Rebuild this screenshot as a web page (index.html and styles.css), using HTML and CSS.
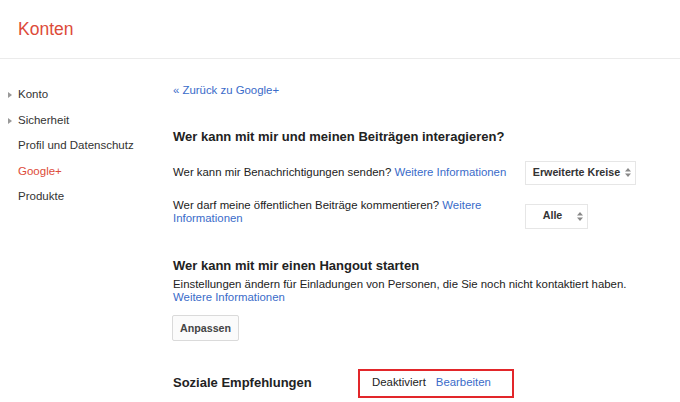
FILE: index.html
```html
<!DOCTYPE html>
<html lang="de">
<head>
    <meta charset="UTF-8">
    <meta name="viewport" content="width=device-width, initial-scale=1.0">
    <title>Konten</title>
    <link rel="stylesheet" href="styles.css">
</head>
<body>
    <div class="header">
        <h1>Konten</h1>
    </div>

    <div class="content">
        <!-- Navigation links -->
        <ul class="sidebar">
            <li class="has-arrow">Konto</li>
            <li class="has-arrow">Sicherheit</li>
            <li>Profil und Datenschutz</li>
            <li class="active">Google+</li>
            <li>Produkte</li>
        </ul>

        <div class="main">
            <a class="back" href="#">« Zurück zu Google+</a>

            <!-- Interaktion -->
            <h2 class="first">Wer kann mit mir und meinen Beiträgen interagieren?</h2>
            <div class="row">
                <div class="label">Wer kann mir Benachrichtigungen senden? <a href="#">Weitere Informationen</a></div>
                <div class="select wide">
                    <span class="value">Erweiterte Kreise</span>
                    <svg class="arrows" width="6" height="9" viewBox="0 0 6 9"><path d="M3 0 L6 3.5 H0 Z M3 9 L6 5.5 H0 Z" fill="#888"/></svg>
                </div>
            </div>
            <div class="row row-top">
                <div class="label">Wer darf meine öffentlichen Beiträge kommentieren? <a href="#">Weitere Informationen</a></div>
                <div class="select narrow">
                    <span class="value">Alle</span>
                    <svg class="arrows" width="6" height="9" viewBox="0 0 6 9"><path d="M3 0 L6 3.5 H0 Z M3 9 L6 5.5 H0 Z" fill="#888"/></svg>
                </div>
            </div>

            <!-- Hangout -->
            <h2 class="hangout">Wer kann mit mir einen Hangout starten</h2>
            <p class="desc">Einstellungen ändern für Einladungen von Personen, die Sie noch nicht kontaktiert haben.<br><a href="#">Weitere Informationen</a></p>
            <button class="btn">Anpassen</button>

            <!-- Soziale Empfehlungen -->
            <div class="social">
                <h2>Soziale Empfehlungen</h2>
                <div class="highlight">
                    <span>Deaktiviert</span>
                    <a href="#">Bearbeiten</a>
                </div>
            </div>
        </div>
    </div>
</body>
</html>
```

FILE: styles.css
```css
body {
    margin: 0;
    font-family: "Liberation Sans", Arial, sans-serif;
    font-size: 11.4px;
    color: #222;
    background-color: #fff;
}
a {
    color: #3a6bc9;
    text-decoration: none;
}
.header {
    height: 59px;
    border-bottom: 1px solid #ebebeb;
    padding: 18px 0 0 18px;
    box-sizing: border-box;
}
.header h1 {
    margin: 0;
    font-size: 17.5px;
    line-height: 22px;
    font-weight: normal;
    color: #dd4b39;
}
.content {
    display: grid;
    grid-template-columns: 173px 1fr;
    padding-top: 21px;
}
.sidebar {
    list-style: none;
    margin: 2px 0 0 0;
    padding: 0 0 0 18px;
    font-size: 11.5px;
}
.sidebar li {
    height: 25.5px;
    line-height: 25px;
    color: #333;
    position: relative;
}
.sidebar li.has-arrow::before {
    content: "";
    position: absolute;
    left: -10px;
    top: 10px;
    border-left: 4px solid #999;
    border-top: 3px solid transparent;
    border-bottom: 3px solid transparent;
}
.sidebar li.active {
    color: #dd4b39;
}
.main {
    padding-top: 3px;
    line-height: 13.5px;
}
.back {
    display: block;
    margin-top: 1px;
}
h2 {
    margin: 0;
    font-size: 13px;
    line-height: 16px;
    color: #222;
}
h2.first {
    margin-top: 31px;
}
.row {
    display: grid;
    grid-template-columns: 352px auto;
    align-items: center;
    margin-top: 16px;
}
.row .label {
    padding-right: 10px;
}
.row-top {
    align-items: start;
    margin-top: 14px;
}
.row-top .select {
    margin-top: 5px;
    height: 25px;
}
.select {
    display: flex;
    align-items: center;
    gap: 3px;
    height: 24px;
    box-sizing: border-box;
    border: 1px solid #e6e6e6;
    padding: 0 4px 0 5px;
    font-size: 10.7px;
    font-weight: bold;
    color: #333;
}
.select .value {
    flex: 1;
    text-align: center;
}
.select.wide {
    width: 111px;
}
.select.narrow {
    width: 63px;
}
h2.hangout {
    margin-top: 29px;
}
.desc {
    margin: 4px 0 0 0;
}
.btn {
    display: block;
    margin: 10px 0 0 -1px;
    height: 26px;
    padding: 0 7px;
    font-family: inherit;
    font-size: 10.7px;
    font-weight: bold;
    color: #444;
    background-color: #fbfbfb;
    border: 1px solid #dadada;
    border-radius: 2px;
}
.social {
    display: grid;
    grid-template-columns: 185px auto;
    align-items: center;
    margin-top: 28px;
}
.highlight {
    justify-self: start;
    display: flex;
    gap: 10px;
    width: 156px;
    height: 29px;
    box-sizing: border-box;
    align-items: center;
    padding-left: 12px;
    border: 2px solid #e2262a;
    color: #222;
}
```
